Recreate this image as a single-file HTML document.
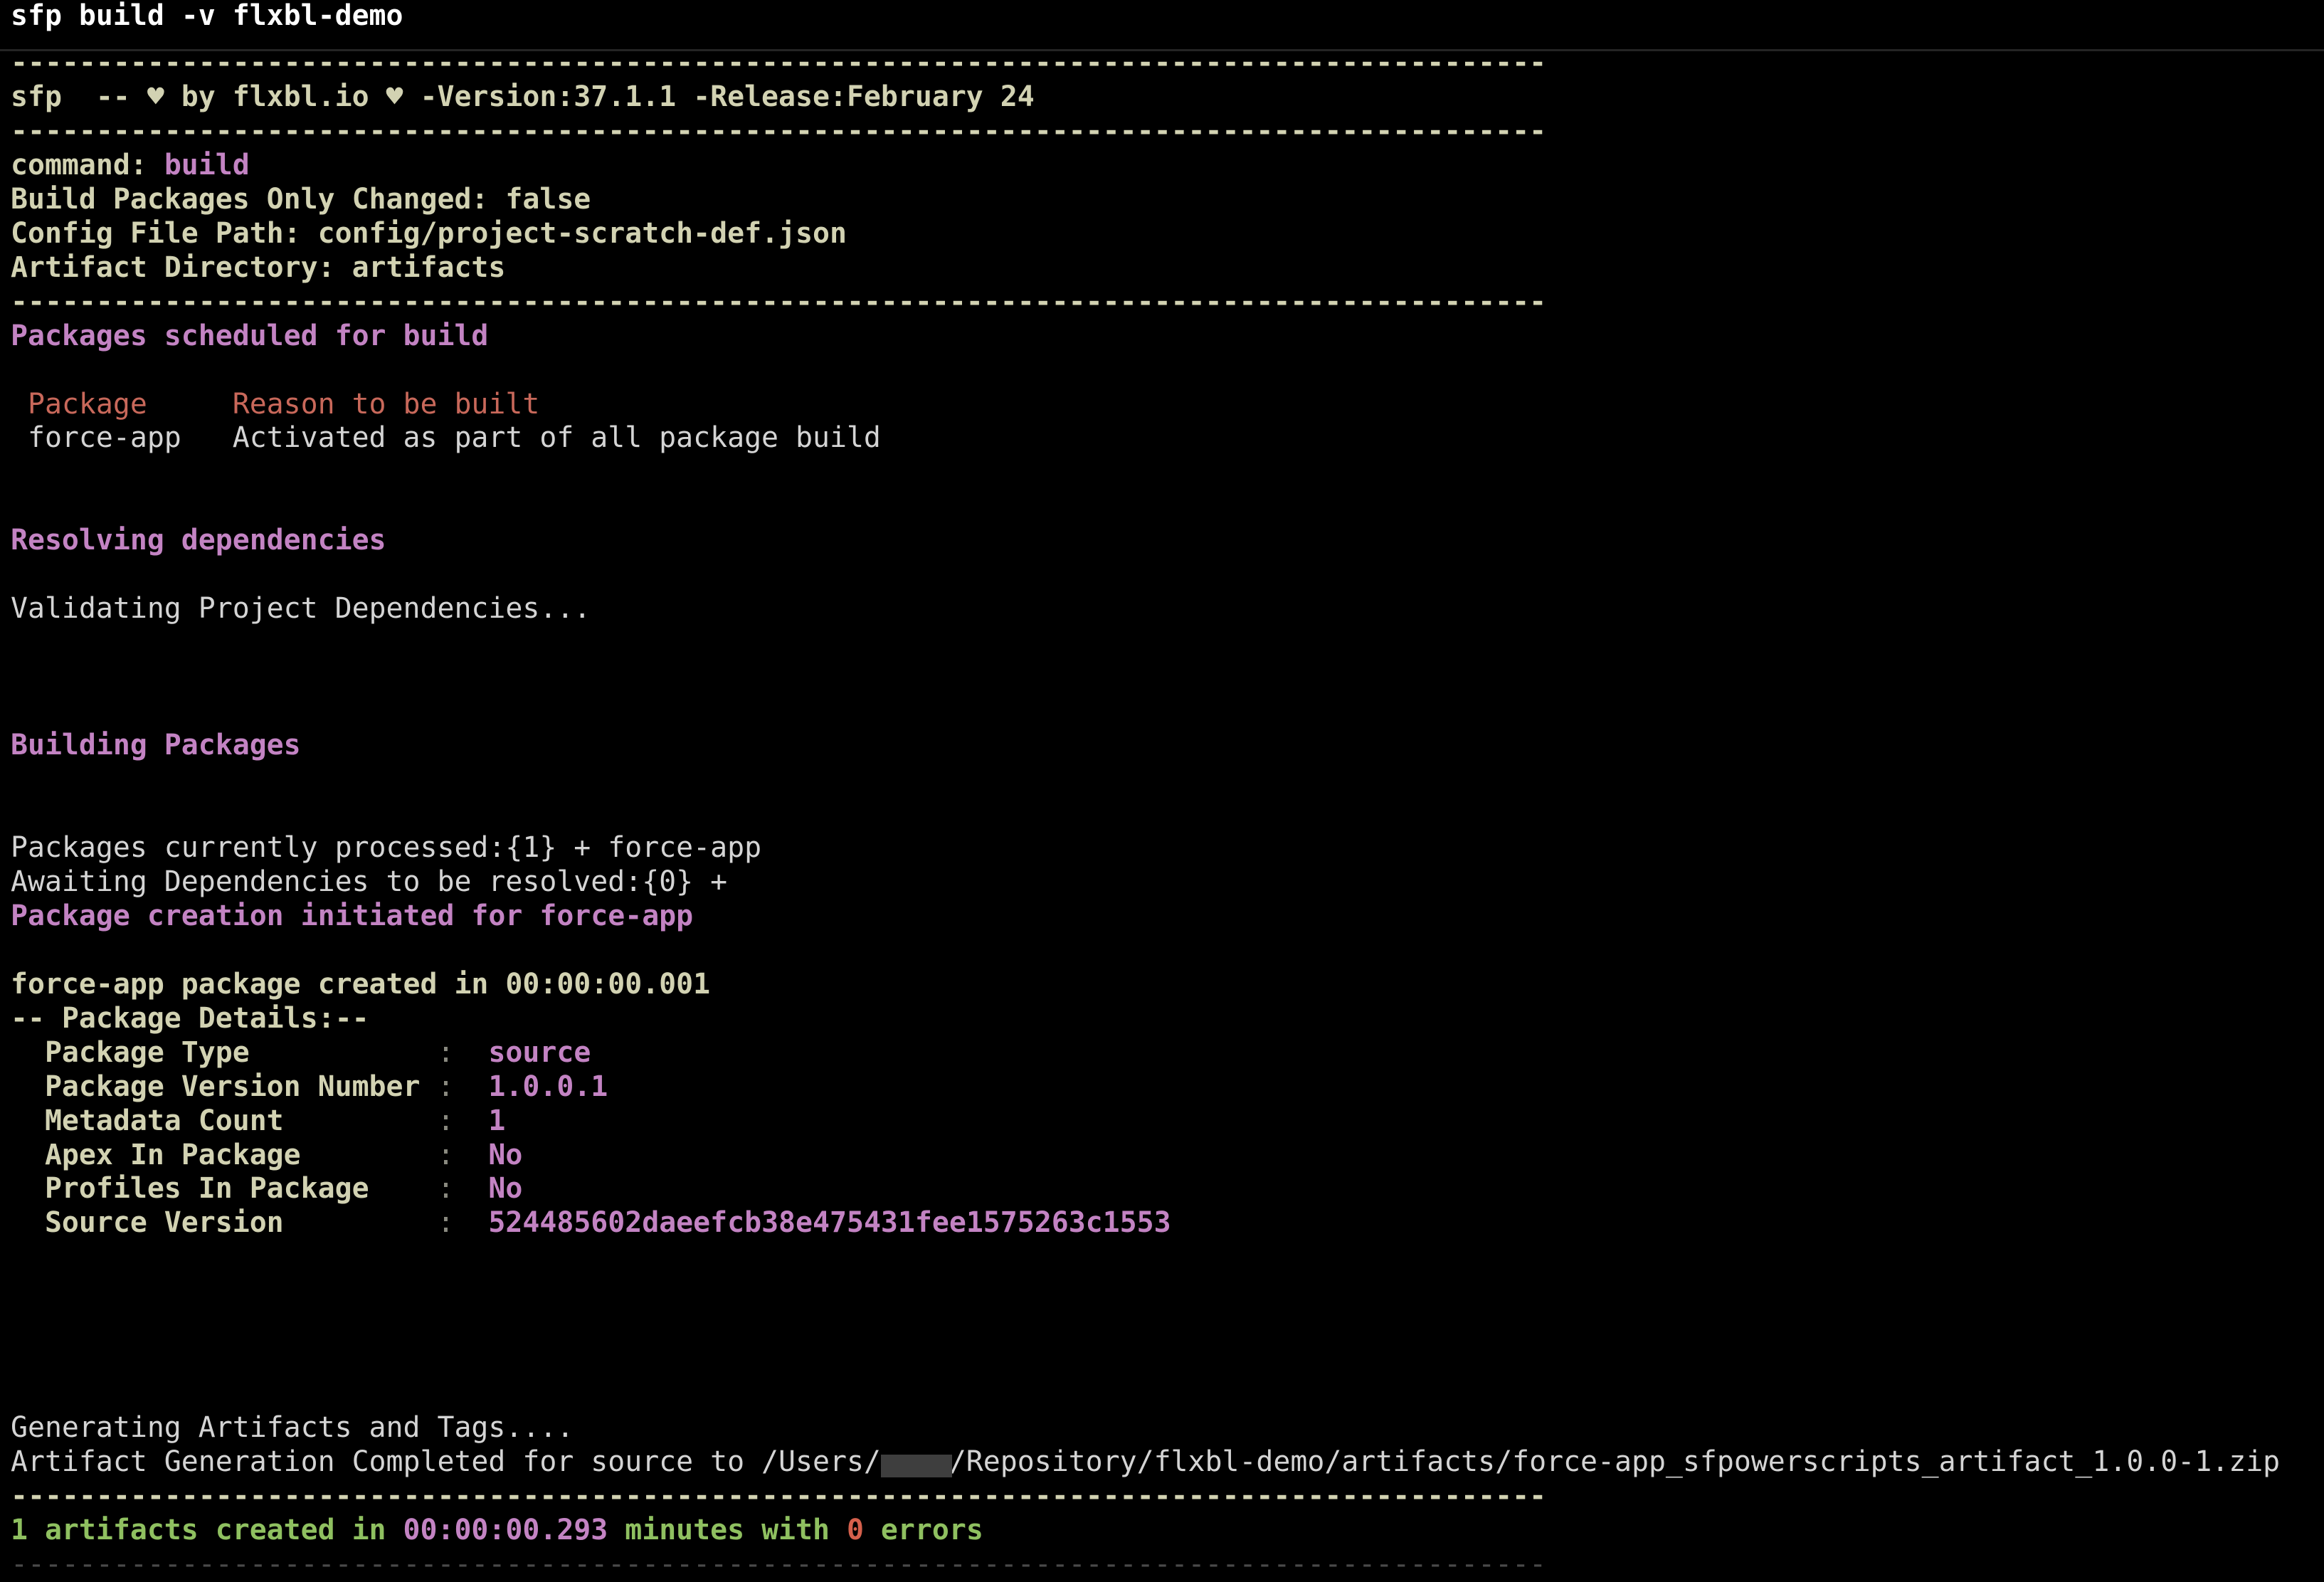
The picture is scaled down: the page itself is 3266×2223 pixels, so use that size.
<!DOCTYPE html>
<html><head><meta charset="utf-8"><style>
html,body{margin:0;padding:0;background:#000;width:3266px;height:2214px;overflow:hidden}
body{font-family:"DejaVu Sans Mono","Liberation Mono",monospace;font-size:39.85px;}
.t{position:absolute;left:15px;top:-2px;line-height:48px;color:#fff;font-weight:bold;white-space:pre}
.sep{position:absolute;left:0;top:69px;width:3266px;height:3px;background:#242424}
pre{position:absolute;left:15px;top:65px;margin:0;font:inherit;line-height:47.95px;white-space:pre;color:#d2d2b2;font-weight:bold}
.p{color:#c383c3}.n{font-weight:normal;color:#d4d4d4}.r{font-weight:normal;color:#c8685a}
.c{font-weight:normal;color:#8a8a80}.g{color:#8fc060}.e{color:#d5604c}.f{color:#4a4a4a;font-weight:normal}
.box{position:absolute;left:1238px;top:2044px;width:100px;height:32px;background:#3e3e3e}
</style></head><body>
<div class="t">sfp build -v flxbl-demo</div>
<div class="sep"></div>
<pre>------------------------------------------------------------------------------------------
sfp  -- ♥ by flxbl.io ♥ -Version:37.1.1 -Release:February 24
------------------------------------------------------------------------------------------
command: <span class="p">build</span>
Build Packages Only Changed: false
Config File Path: config/project-scratch-def.json
Artifact Directory: artifacts
------------------------------------------------------------------------------------------
<span class="p">Packages scheduled for build</span>

<span class="r"> Package     Reason to be built</span>
<span class="n"> force-app   Activated as part of all package build</span>


<span class="p">Resolving dependencies</span>

<span class="n">Validating Project Dependencies...</span>



<span class="p">Building Packages</span>


<span class="n">Packages currently processed:{1} + force-app</span>
<span class="n">Awaiting Dependencies to be resolved:{0} +</span>
<span class="p">Package creation initiated for force-app</span>

force-app package created in 00:00:00.001
-- Package Details:--
  Package Type           <span class="c">:</span>  <span class="p">source</span>
  Package Version Number <span class="c">:</span>  <span class="p">1.0.0.1</span>
  Metadata Count         <span class="c">:</span>  <span class="p">1</span>
  Apex In Package        <span class="c">:</span>  <span class="p">No</span>
  Profiles In Package    <span class="c">:</span>  <span class="p">No</span>
  Source Version         <span class="c">:</span>  <span class="p">524485602daeefcb38e475431fee1575263c1553</span>





<span class="n">Generating Artifacts and Tags....</span>
<span class="n">Artifact Generation Completed for source to /Users/    /Repository/flxbl-demo/artifacts/force-app_sfpowerscripts_artifact_1.0.0-1.zip</span>
------------------------------------------------------------------------------------------
<span class="g">1 artifacts created in <span class="p">00:00:00.293</span> minutes with <span class="e">0</span> errors</span>
<span class="f">------------------------------------------------------------------------------------------</span></pre>
<div class="box"></div>
</body></html>
